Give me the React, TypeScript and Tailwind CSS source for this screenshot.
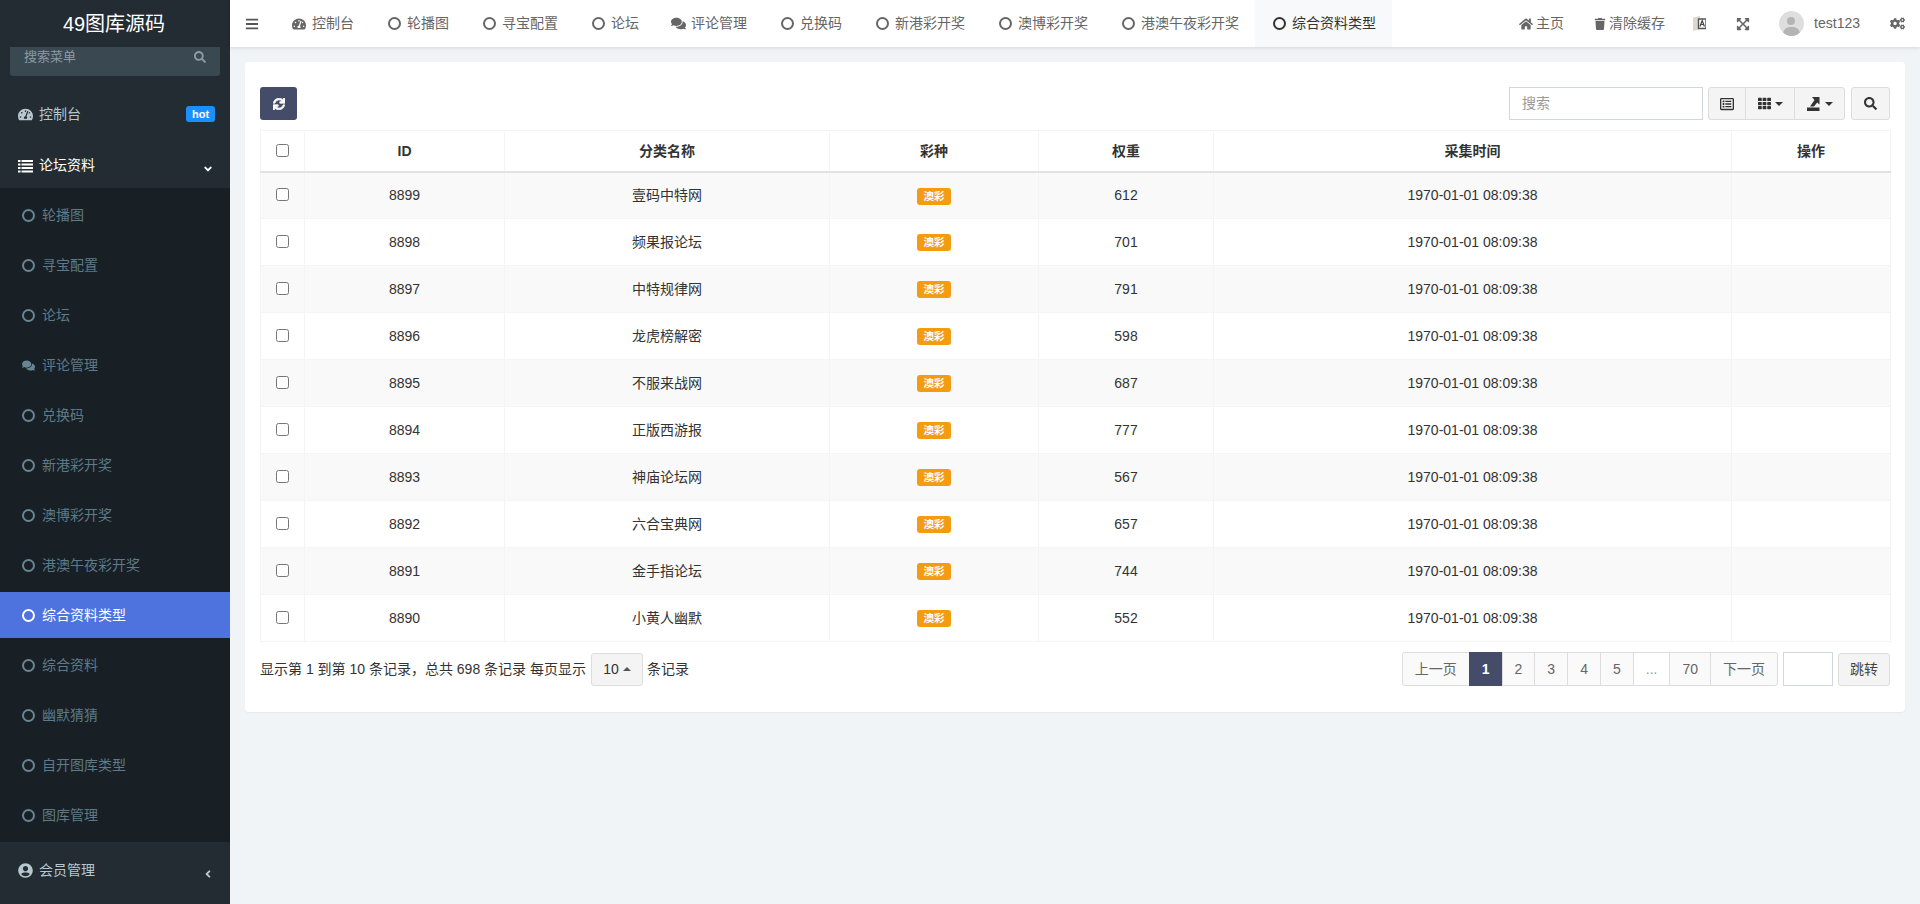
import React from "react"
import {
  FaAngleDown,
  FaAngleLeft,
  FaBars,
  FaCogs,
  FaComments,
  FaExpandArrowsAlt,
  FaHome,
  FaRegListAlt,
  FaSearch,
  FaSync,
  FaTachometerAlt,
  FaTh,
  FaTrash,
  FaUserCircle,
} from "react-icons/fa"

const tabs = ["轮播图", "寻宝配置", "论坛", "评论管理", "兑换码", "新港彩开奖", "澳博彩开奖", "港澳午夜彩开奖", "综合资料类型"]
const menu = ["轮播图", "寻宝配置", "论坛", "评论管理", "兑换码", "新港彩开奖", "澳博彩开奖", "港澳午夜彩开奖", "综合资料类型", "综合资料", "幽默猜猜", "自开图库类型", "图库管理"]
const rows = [
  { id: 8899, name: "壹码中特网", weight: 612 },
  { id: 8898, name: "频果报论坛", weight: 701 },
  { id: 8897, name: "中特规律网", weight: 791 },
  { id: 8896, name: "龙虎榜解密", weight: 598 },
  { id: 8895, name: "不服来战网", weight: 687 },
  { id: 8894, name: "正版西游报", weight: 777 },
  { id: 8893, name: "神庙论坛网", weight: 567 },
  { id: 8892, name: "六合宝典网", weight: 657 },
  { id: 8891, name: "金手指论坛", weight: 744 },
  { id: 8890, name: "小黄人幽默", weight: 552 },
]
const pages = ["2", "3", "4", "5"]

function Ring({ className }: { className: string }) {
  return <span className={`block h-[13px] w-[13px] shrink-0 rounded-full border-2 ${className}`} />
}

function Caret({ up }: { up?: boolean }) {
  return (
    <span
      className={`inline-block h-0 w-0 border-x-4 border-x-transparent ${up ? "border-b-4 border-b-[#555]" : "border-t-4 border-t-[#333]"}`}
    />
  )
}

function Tabs() {
  return (
    <div className="flex h-full">
      <div className="flex h-full items-center pr-4 pl-[18px]">
        <FaTachometerAlt className="mr-1.5 h-[14px] w-[14px] text-[#666]" />
        <span>控制台</span>
      </div>
      {tabs.map((tab) => {
        const active = tab === "综合资料类型"
        const comments = tab === "评论管理"
        return (
          <div
            key={tab}
            className={`flex h-full items-center pr-4 ${comments ? "pl-[17px]" : "pl-[18px]"} ${active ? "bg-[#f8f9fa] text-[#333]" : ""}`}
          >
            <span className="mr-1.5 flex w-[13px] shrink-0 justify-center">
              {comments ? (
                <FaComments className="h-[15px] w-[15px] shrink-0 text-[#666]" />
              ) : (
                <Ring className={active ? "border-[#333]" : "border-[#666]"} />
              )}
            </span>
            <span>{tab}</span>
          </div>
        )
      })}
    </div>
  )
}

function Sidebar() {
  return (
    <aside className="flex h-full w-[230px] shrink-0 flex-col bg-[#222c32] text-[14px] text-[#b8c7ce]">
      <div className="flex h-[47px] shrink-0 items-center justify-center pr-0.5 text-[20px] text-white">49图库源码</div>
      <div className="mx-2.5 flex h-[29px] shrink-0 items-start justify-between rounded-b-[3px] bg-[#3a4851] px-3.5 text-[13px] leading-[20px] text-[#8b9aa3]">
        <span>搜索菜单</span>
        <FaSearch className="mt-[4px] h-3 w-3" />
      </div>

      <div className="mt-[14px] flex h-[48px] shrink-0 items-center pr-[15px] pl-[18px]">
        <FaTachometerAlt className="h-[15px] w-[15px] shrink-0" />
        <span className="ml-1.5">控制台</span>
        <span className="ml-auto flex h-4 w-[29px] items-center justify-center rounded-[3px] bg-[#1890ff] text-[11px] font-bold text-white">hot</span>
      </div>

      <div className="flex h-[50px] shrink-0 items-center pt-1 pr-[16px] pl-[18px] text-white">
        <svg className="h-[15px] w-[15px] shrink-0" viewBox="0 0 15 15" fill="currentColor">
          <path d="M0 2h2.500v2H0zM3.500 2H15v2H3.500zM0 5.500h2.500v2H0zM3.500 5.500H15v2H3.500zM0 9h2.500v2H0zM3.500 9H15v2H3.500zM0 12.500h2.500v2H0zM3.500 12.500H15v2H3.500z" />
        </svg>
        <span className="ml-1.5">论坛资料</span>
        <FaAngleDown className="mt-2 ml-auto h-3 w-3" />
      </div>

      <ul className="shrink-0 bg-[#182025] pt-1">
        {menu.map((item) => {
          const active = item === "综合资料类型"
          return (
            <li
              key={item}
              className={`mb-1 flex h-[46px] items-center pl-[22px] ${active ? "bg-[#4e73df] text-white" : "text-[#5d7a88]"}`}
            >
              {item === "评论管理" ? (
                <FaComments className="h-[13px] w-[13px] shrink-0 text-[#678593]" />
              ) : (
                <Ring className={active ? "border-white" : "border-[#678593]"} />
              )}
              <span className="ml-[7px]">{item}</span>
            </li>
          )
        })}
      </ul>

      <div className="flex h-[56px] shrink-0 items-center pr-[16px] pl-[18px]">
        <FaUserCircle className="h-[15px] w-[15px] shrink-0" />
        <span className="ml-1.5">会员管理</span>
        <FaAngleLeft className="mt-2 ml-auto h-3 w-3" />
      </div>
    </aside>
  )
}

function Header() {
  return (
    <header className="z-10 flex h-[47px] shrink-0 items-center bg-white text-[14px] text-[#666] shadow-[0_1px_4px_rgba(0,0,0,0.12)]">
      <div className="flex w-[44px] shrink-0 justify-center">
        <FaBars className="h-[14px] w-[14px] text-[#555]" />
      </div>
      <Tabs />

      <div className="ml-auto flex items-center pr-[15px]">
        <FaHome className="h-[14px] w-[14px]" />
        <span className="ml-[3px]">主页</span>
        <FaTrash className="ml-[30px] h-3 w-3" />
        <span className="ml-[3px]">清除缓存</span>
        <svg className="ml-[28px] h-[15px] w-[13px]" viewBox="0 0 13 15">
          <path d="M0 1.500 7 0v13l-7 2z" fill="#dcd8cc" />
          <path d="M5.500 3H13v9.500H5.500z" fill="#fff" stroke="#555" strokeWidth="1.400" />
          <path d="M7 10.500 9.200 4.500l2.200 6M7.800 8.500h2.800" fill="none" stroke="#444" strokeWidth="1.200" />
        </svg>
        <FaExpandArrowsAlt className="ml-[30px] h-[14px] w-[14px]" />
        <div className="relative ml-[29px] h-[25px] w-[25px] overflow-hidden rounded-full bg-[#dedede]">
          <span className="absolute top-[6px] left-[8px] h-[8px] w-[8px] rounded-full bg-[#b4b4b4]" />
          <span className="absolute top-[16px] left-[4px] h-[14px] w-[17px] rounded-full bg-[#b4b4b4]" />
        </div>
        <span className="ml-[10px]">test123</span>
        <FaCogs className="ml-[30px] h-[15px] w-[15px]" />
      </div>
    </header>
  )
}

function Toolbar() {
  return (
    <div className="mb-[10px] flex h-[33px] items-center text-[#333]">
      <button className="flex h-[33px] w-[37px] items-center justify-center rounded-[3px] bg-[#444c69] text-white">
        <FaSync className="h-3 w-3 stroke-current stroke-[30]" />
      </button>

      <div className="ml-auto flex h-[33px] w-[194px] items-center border border-[#d2d6de] pl-3 text-[#999]">搜索</div>

      <div className="ml-[5px] flex h-[33px] rounded-[3px] border border-[#ddd] bg-[#f4f4f4]">
        <span className="flex w-[36px] items-center justify-center">
          <FaRegListAlt className="h-[14px] w-[14px]" />
        </span>
        <span className="flex w-[49px] items-center justify-center gap-1 border-l border-[#ddd]">
          <FaTh className="h-[13px] w-[13px]" />
          <Caret />
        </span>
        <span className="flex w-[50px] items-center justify-center gap-1 border-l border-[#ddd]">
          <svg className="h-[14px] w-[14px]" viewBox="0 0 14 14">
            <path d="M0 10.500h12.500V14H0z" fill="#333" />
            <path d="M5 0h7.500v7.500L10.200 5.500 7 9.500H3L7.500 3z" fill="#333" />
          </svg>
          <Caret />
        </span>
      </div>

      <span className="ml-[6px] flex h-[33px] w-[39px] items-center justify-center rounded-[3px] border border-[#ddd] bg-[#f4f4f4]">
        <FaSearch className="h-[13px] w-[13px]" />
      </span>
    </div>
  )
}

function DataTable() {
  return (
    <table className="w-full table-fixed border-collapse text-center text-[#333]">
      <colgroup>
        <col className="w-[44px]" />
        <col className="w-[200px]" />
        <col className="w-[325px]" />
        <col className="w-[209px]" />
        <col className="w-[175px]" />
        <col className="w-[518px]" />
        <col className="w-[159px]" />
      </colgroup>
      <thead>
        <tr className="h-[41px] border-b-2 border-[#e2e2e2] font-bold">
          <th className="border border-b-2 border-[#f4f4f4] border-b-[#e2e2e2]">
            <input type="checkbox" className="m-0 block h-[13px] w-[13px] translate-x-[15px]" />
          </th>
          {["ID", "分类名称", "彩种", "权重", "采集时间", "操作"].map((title) => (
            <th key={title} className="border border-b-2 border-[#f4f4f4] border-b-[#e2e2e2] pt-0.5 font-bold">
              {title}
            </th>
          ))}
        </tr>
      </thead>
      <tbody>
        {rows.map((row, index) => (
          <tr key={row.id} className={`h-[47px] ${index % 2 === 0 ? "bg-[#f9f9f9]" : "bg-white"}`}>
            <td className="border border-[#f4f4f4]">
              <input type="checkbox" className="m-0 block h-[13px] w-[13px] translate-x-[15px] -translate-y-[1px]" />
            </td>
            <td className="border border-[#f4f4f4]">{row.id}</td>
            <td className="border border-[#f4f4f4]">{row.name}</td>
            <td className="border border-[#f4f4f4]">
              <span className="inline-block h-[17px] w-[34px] rounded-[3px] bg-[#f39c12] align-middle text-[10.5px] leading-[17px] font-bold text-white">
                澳彩
              </span>
            </td>
            <td className="border border-[#f4f4f4]">{row.weight}</td>
            <td className="border border-[#f4f4f4]">1970-01-01 08:09:38</td>
            <td className="border border-[#f4f4f4]" />
          </tr>
        ))}
      </tbody>
    </table>
  )
}

function Footer() {
  return (
    <div className="mt-[10px] flex h-[34px] items-center text-[#333]">
      <span>显示第 1 到第 10 条记录，总共 698 条记录 每页显示</span>
      <span className="mr-[4px] ml-[5px] flex h-[33px] w-[52px] items-center justify-center gap-1 rounded-[3px] border border-[#ddd] bg-[#f4f4f4]">
        10
        <Caret up />
      </span>
      <span>条记录</span>

      <div className="ml-auto flex h-[34px] text-[#666]">
        <span className="flex items-center rounded-l-[3px] border border-[#ddd] bg-[#fafafa] px-3">上一页</span>
        <span className="-ml-px flex items-center bg-[#444c69] px-[13px] font-bold text-white">1</span>
        {pages.map((page) => (
          <span key={page} className="-ml-px flex items-center border border-[#ddd] bg-[#fafafa] px-3">
            {page}
          </span>
        ))}
        <span className="-ml-px flex items-center border border-[#ddd] bg-white px-3 text-[#999]">...</span>
        <span className="-ml-px flex items-center border border-[#ddd] bg-[#fafafa] px-3">70</span>
        <span className="-ml-px flex items-center rounded-r-[3px] border border-[#ddd] bg-[#fafafa] px-3">下一页</span>
      </div>
      <span className="ml-[5px] h-[34px] w-[50px] border border-[#d2d6de]" />
      <span className="ml-[5px] flex h-[33px] w-[52px] items-center justify-center rounded-[3px] border border-[#ddd] bg-[#f4f4f4] text-[#444]">跳转</span>
    </div>
  )
}

export default function App() {
  return (
    <div className="flex h-screen overflow-hidden font-['Liberation_Sans','Noto_Sans_CJK_SC',sans-serif] text-[14px]">
      <Sidebar />
      <main className="flex min-w-0 flex-1 flex-col bg-[#f1f4f6]">
        <Header />
        <div className="p-[15px]">
          <section className="h-[650px] rounded-[4px] bg-white px-[15px] pt-[25px] shadow-[0_1px_1px_rgba(0,0,0,0.05)]">
            <Toolbar />
            <DataTable />
            <Footer />
          </section>
        </div>
      </main>
    </div>
  )
}
